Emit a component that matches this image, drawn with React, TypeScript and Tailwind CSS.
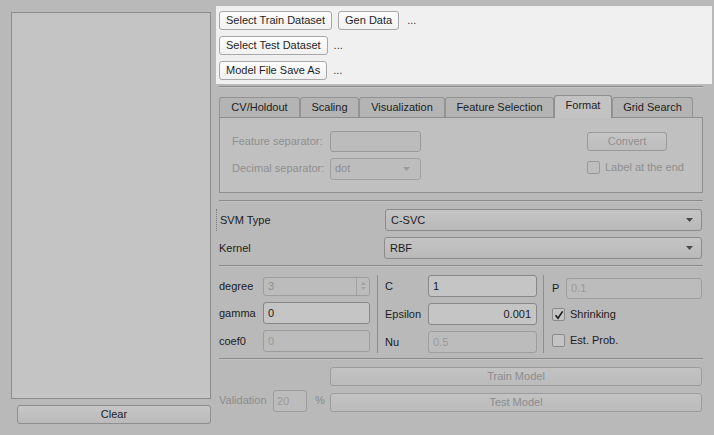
import React from 'react';

function TopButton({ label }: { label: string }) {
  return (
    <div className="h-[19px] px-[6px] flex items-center border border-[#a8a8a8] rounded-[3px] bg-gradient-to-b from-[#fdfdfd] to-[#f1f1f1] text-[#1e1e1e]">
      {label}
    </div>
  );
}

function Tab({ label, active, w }: { label: string; active?: boolean; w: string }) {
  if (active) {
    return (
      <div className={`${w} h-[23px] -mb-px flex items-center justify-center border border-b-0 border-[#8e8e8e] rounded-t-[3px] bg-[#c3c3c3] text-[#1c1c1c] pb-[3px] z-10`}>
        {label}
      </div>
    );
  }
  return (
    <div className={`${w} h-[20px] flex items-center justify-center border border-b-0 border-[#939393] rounded-t-[3px] bg-[#b4b4b4] text-[#1c1c1c]`}>
      {label}
    </div>
  );
}

function Caret() {
  return (
    <svg width="7" height="4" viewBox="0 0 7 4" className="shrink-0">
      <path d="M0 0 L7 0 L3.5 4 Z" fill="#4a4a4a" />
    </svg>
  );
}

function Check({ checked, label }: { checked?: boolean; label: string }) {
  return (
    <div className="flex items-center gap-[5px] text-[#1c1c1c]">
      <div className="w-[13px] h-[13px] border border-[#8a8a8a] rounded-[2px] bg-[#c4c4c4] flex items-center justify-center">
        {checked && (
          <svg width="10" height="10" viewBox="0 0 10 10">
            <path d="M1.5 5.2 L4 8.2 L8.6 1.4" stroke="#1a1a1a" strokeWidth="1.6" fill="none" />
          </svg>
        )}
      </div>
      {label}
    </div>
  );
}

export default function App() {
  return (
    <div className="w-[714px] h-[435px] overflow-hidden bg-[#b9b9b9] flex font-['Liberation_Sans',Arial,sans-serif] text-[11px] leading-none select-none">
      {/* left column */}
      <div className="w-[211px] pl-[11px] pt-[12px] flex flex-col shrink-0">
        <div className="h-[387px] border border-[#8c8c8c] bg-[#c4c4c4]" />
        <div className="ml-[6px] mt-[6px] h-[19px] border border-[#8e8e8e] rounded-[3px] bg-gradient-to-b from-[#c6c6c6] to-[#bbbbbb] flex items-center justify-center text-[#1c1c1c]">
          Clear
        </div>
      </div>

      {/* right column */}
      <div className="ml-[5px] pt-[6px] w-[496px] flex flex-col">
        <div className="h-[78px] bg-[#f0f0f0] pl-[3px] pt-[5px] flex flex-col gap-[6px]">
          <div className="flex items-center">
            <TopButton label="Select Train Dataset" />
            <div className="ml-[6px]"><TopButton label="Gen Data" /></div>
            <span className="ml-[8px] text-[#333]">...</span>
          </div>
          <div className="flex items-center">
            <TopButton label="Select Test Dataset" />
            <span className="ml-[6px] text-[#333]">...</span>
          </div>
          <div className="flex items-center">
            <TopButton label="Model File Save As" />
            <span className="ml-[6px] text-[#333]">...</span>
          </div>
        </div>

        <div className="pl-[3px] w-[487px]">
          <div className="mt-[2px] h-[2px] border-t border-[#8a8a8a] border-b border-b-[#c6c6c6]" />

          {/* tabs */}
          <div className="mt-[7px] flex items-end h-[22px]">
            <Tab label="CV/Holdout" w="w-[81px]" />
            <Tab label="Scaling" w="w-[59px]" />
            <Tab label="Visualization" w="w-[86px]" />
            <Tab label="Feature Selection" w="w-[109px]" />
            <Tab label="Format" active w="w-[58px]" />
            <Tab label="Grid Search" w="w-[81px]" />
          </div>
          <div className="w-[484px] h-[76px] border border-[#8e8e8e] bg-[#c0c0c0] flex text-[#8f8f8f]">
            <div className="pl-[12px] pt-[13px] flex flex-col gap-[6px]">
              <div className="flex items-center h-[21px]">
                <span className="w-[98px]">Feature separator:</span>
                <div className="w-[91px] h-[21px] border border-[#9a9a9a] rounded-[3px] bg-[#bcbcbc]" />
              </div>
              <div className="flex items-center h-[21px]">
                <span className="w-[98px]">Decimal separator:</span>
                <div className="w-[91px] h-[22px] border border-[#a0a0a0] rounded-[3px] bg-[#bdbdbd] flex items-center justify-between pl-[4px] pr-[10px]">
                  <span>dot</span>
                  <svg width="7" height="4" viewBox="0 0 7 4"><path d="M0 0 L7 0 L3.5 4 Z" fill="#9c9c9c" /></svg>
                </div>
              </div>
            </div>
            <div className="ml-auto mr-[18px] pt-[14px] flex flex-col gap-[10px] w-[97px]">
              <div className="w-[80px] h-[19px] border border-[#9a9a9a] rounded-[3px] bg-gradient-to-b from-[#c6c6c6] to-[#bcbcbc] flex items-center justify-center">
                Convert
              </div>
              <div className="flex items-center gap-[5px]">
                <div className="w-[13px] h-[13px] border border-[#9a9a9a] rounded-[2px] bg-[#bebebe]" />
                Label at the end
              </div>
            </div>
          </div>

          <div className="mt-[7px] h-[2px] border-t border-[#8a8a8a] border-b border-b-[#c2c2c2]" />

          {/* svm type / kernel */}
          <div className="mt-[7px] flex flex-col gap-[6px] text-[#1c1c1c]">
            <div className="flex items-center h-[22px] -ml-[3px] border-l border-dotted border-[#7a7a7a] pl-[3px]">
              <span className="w-[165px]">SVM Type</span>
              <div className="flex-1 mr-[1px] h-[22px] border border-[#8b8b8b] rounded-[3px] bg-gradient-to-b from-[#c4c4c4] to-[#b9b9b9] flex items-center justify-between pl-[5px] pr-[8px]">
                <span>C-SVC</span>
                <Caret />
              </div>
            </div>
            <div className="flex items-center h-[22px]">
              <span className="w-[165px]">Kernel</span>
              <div className="flex-1 mr-[1px] h-[22px] border border-[#8b8b8b] rounded-[3px] bg-gradient-to-b from-[#c4c4c4] to-[#b9b9b9] flex items-center justify-between pl-[5px] pr-[8px]">
                <span>RBF</span>
                <Caret />
              </div>
            </div>
          </div>

          <div className="mt-[6px] h-[2px] border-t border-[#8a8a8a] border-b border-b-[#c2c2c2]" />

          {/* parameters */}
          <div className="mt-[8px] flex text-[#1c1c1c]">
            <div className="w-[151px] flex flex-col gap-[6px] pt-[1px]">
              <div className="flex items-center h-[20px]">
                <span className="w-[44px]">degree</span>
                <div className="flex-1 h-[19px] border border-[#9d9d9d] rounded-[3px] bg-[#bcbcbc] flex items-center text-[#8f8f8f]">
                  <span className="flex-1 pl-[4px]">3</span>
                  <div className="w-[13px] h-full border-l border-[#a2a2a2] flex flex-col items-center justify-center gap-[2px]">
                    <svg width="5" height="3" viewBox="0 0 5 3"><path d="M0 3 L5 3 L2.5 0 Z" fill="#a4a4a4" /></svg>
                    <svg width="5" height="3" viewBox="0 0 5 3"><path d="M0 0 L5 0 L2.5 3 Z" fill="#a4a4a4" /></svg>
                  </div>
                </div>
              </div>
              <div className="flex items-center h-[22px]">
                <span className="w-[44px]">gamma</span>
                <div className="flex-1 h-[22px] border border-[#888888] rounded-[3px] bg-[#c5c5c5] flex items-center pl-[4px]">0</div>
              </div>
              <div className="flex items-center h-[22px]">
                <span className="w-[44px]">coef0</span>
                <div className="flex-1 h-[22px] border border-[#9d9d9d] rounded-[3px] bg-[#bcbcbc] flex items-center pl-[4px] text-[#9a9a9a]">0</div>
              </div>
            </div>
            <div className="ml-[7px] w-px h-[78px] bg-[#8e8e8e]" />
            <div className="ml-[7px] w-[152px] flex flex-col gap-[6px]">
              <div className="flex items-center h-[22px]">
                <span className="w-[43px]">C</span>
                <div className="flex-1 h-[22px] border border-[#888888] rounded-[3px] bg-[#c5c5c5] flex items-center pl-[4px]">1</div>
              </div>
              <div className="flex items-center h-[22px]">
                <span className="w-[43px]">Epsilon</span>
                <div className="flex-1 h-[22px] border border-[#888888] rounded-[3px] bg-[#c5c5c5] flex items-center justify-end pr-[5px]">0.001</div>
              </div>
              <div className="flex items-center h-[22px]">
                <span className="w-[43px]">Nu</span>
                <div className="flex-1 h-[22px] border border-[#9d9d9d] rounded-[3px] bg-[#bcbcbc] flex items-center pl-[4px] text-[#9a9a9a]">0.5</div>
              </div>
            </div>
            <div className="ml-[6px] w-px h-[78px] bg-[#8e8e8e]" />
            <div className="ml-[8px] flex-1 mr-[1px] flex flex-col gap-[5px] pt-[3px]">
              <div className="flex items-center h-[21px]">
                <span className="w-[14px]">P</span>
                <div className="flex-1 h-[21px] border border-[#9d9d9d] rounded-[3px] bg-[#bcbcbc] flex items-center pl-[4px] text-[#9a9a9a]">0.1</div>
              </div>
              <div className="flex items-center h-[21px]">
                <Check checked label="Shrinking" />
              </div>
              <div className="flex items-center h-[21px]">
                <Check label="Est. Prob." />
              </div>
            </div>
          </div>

          <div className="mt-[5px] h-[2px] border-t border-[#8a8a8a] border-b border-b-[#c2c2c2]" />

          {/* train / test */}
          <div className="mt-[7px] flex flex-col gap-[4px] text-[#8c8c8c]">
            <div className="flex">
              <div className="w-[111px]" />
              <div className="flex-1 mr-[1px] h-[19px] border border-[#9c9c9c] rounded-[3px] bg-gradient-to-b from-[#c3c3c3] to-[#bbbbbb] flex items-center justify-center">
                Train Model
              </div>
            </div>
            <div className="flex items-end">
              <span className="w-[54px] pb-[6px]">Validation</span>
              <div className="w-[34px] h-[22px] border border-[#9d9d9d] rounded-[3px] bg-[#bcbcbc] flex items-center pl-[3px] text-[#9a9a9a]">20</div>
              <span className="ml-[8px] w-[15px] pb-[6px]">%</span>
              <div className="flex-1 mr-[1px] h-[19px] border border-[#9c9c9c] rounded-[3px] bg-gradient-to-b from-[#c3c3c3] to-[#bbbbbb] flex items-center justify-center">
                Test Model
              </div>
            </div>
          </div>
        </div>
      </div>
    </div>
  );
}
